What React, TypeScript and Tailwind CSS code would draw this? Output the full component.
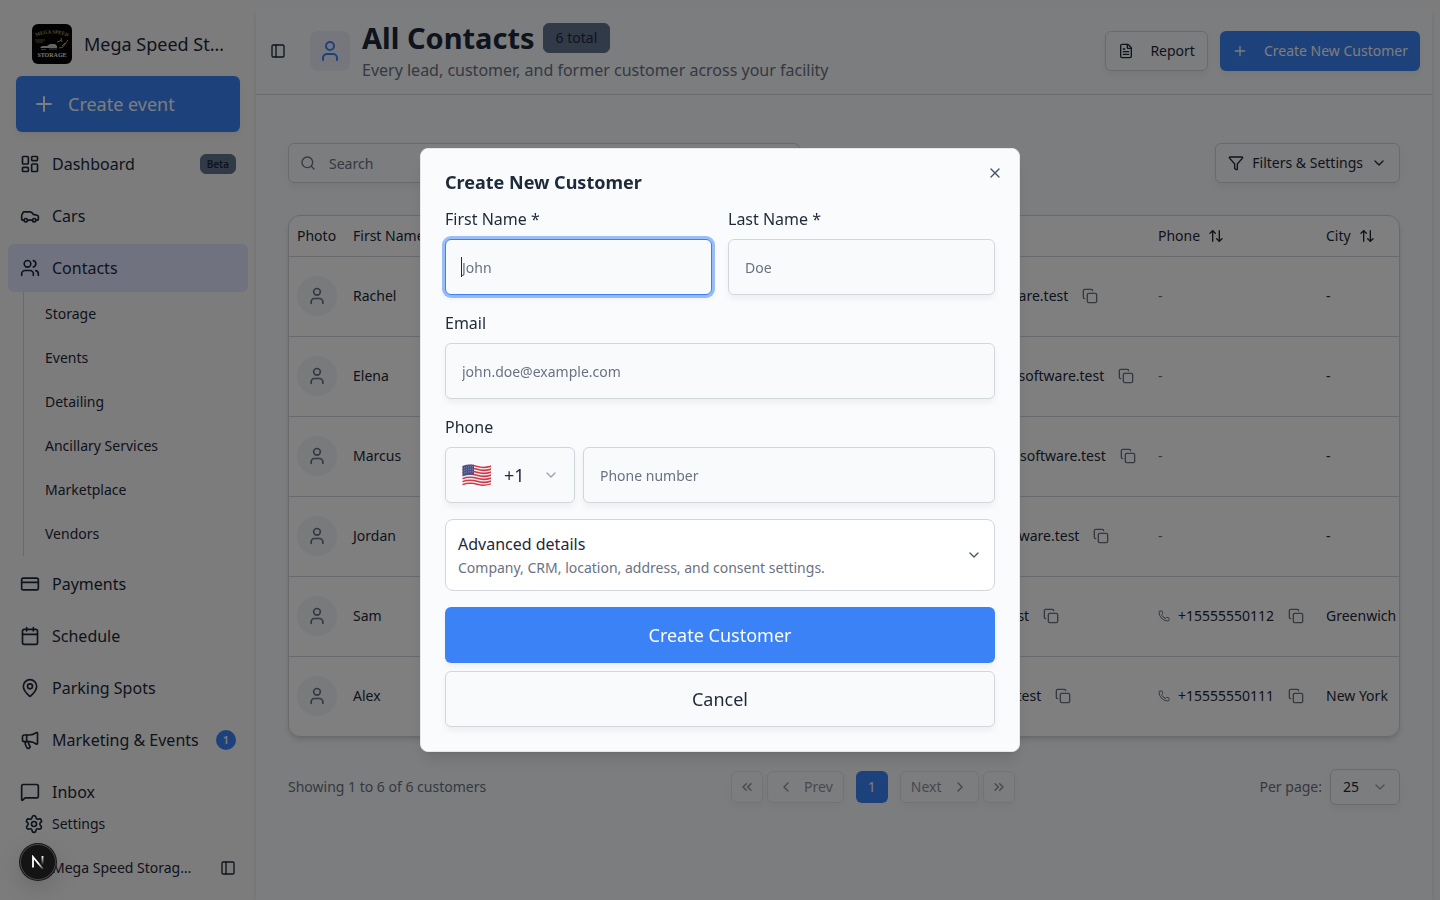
import React from 'react';
import {
  ArrowUpDown,
  Calendar,
  Car,
  ChevronDown,
  ChevronLeft,
  ChevronRight,
  ChevronsLeft,
  ChevronsRight,
  Copy,
  CreditCard,
  FileText,
  Funnel,
  LayoutDashboard,
  MapPin,
  Megaphone,
  MessageSquare,
  PanelLeft,
  Phone,
  Plus,
  Search,
  Settings,
  User,
  Users,
  X,
} from 'lucide-react';

const mainNav = [
  { label: 'Dashboard', icon: LayoutDashboard, beta: true },
  { label: 'Cars', icon: Car },
  {
    label: 'Contacts',
    icon: Users,
    active: true,
    children: ['Storage', 'Events', 'Detailing', 'Ancillary Services', 'Marketplace', 'Vendors'],
  },
  { label: 'Payments', icon: CreditCard },
  { label: 'Schedule', icon: Calendar },
  { label: 'Parking Spots', icon: MapPin },
  { label: 'Marketing & Events', icon: Megaphone, count: 1 },
  { label: 'Inbox', icon: MessageSquare },
];

const contacts = [
  { first: 'Rachel', last: 'Cooper', phone: '', city: '-' },
  { first: 'Elena', last: 'Montgomery', phone: '', city: '-' },
  { first: 'Marcus', last: 'Greenwood', phone: '', city: '-' },
  { first: 'Jordan', last: 'Osborne', phone: '', city: '-' },
  { first: 'Sam', last: 'Lee', phone: '+15555550112', city: 'Greenwich' },
  { first: 'Alex', last: 'Price', phone: '+15555550111', city: 'New York' },
];

const softShadow = 'shadow-[0_4px_6px_rgba(0,0,0,0.05)]';

const inputClass = `h-14 w-full min-w-0 rounded-md border border-gray-300 bg-[#f9fafc] px-4 text-sm text-gray-800 ${softShadow} outline-none placeholder:text-gray-500 focus:border-[#3b82f6] focus:ring-3 focus:ring-[#3b82f6]/50`;

const Logo = () => (
  <svg viewBox="0 0 40 40" className="size-10 shrink-0 rounded-md" aria-hidden="true">
    <rect width="40" height="40" fill="#050505" />
    <path id="logo-arc" d="M1 14Q20 5 39 14" fill="none" />
    <text fontSize="5" fontWeight="700" fontFamily="Liberation Serif, serif" fill="#b59a63">
      <textPath href="#logo-arc" startOffset="50%" textAnchor="middle">MEGA SPEED</textPath>
    </text>
    <path d="M3 16h10M4 18h7" stroke="#7d6a45" strokeWidth="1" />
    <path d="M8 24l2-2h5l3-2h5l2 2v2z" fill="#c9c9c9" />
    <path d="M9 25.500h5M17 25h8" stroke="#777" strokeWidth="1" />
    <path d="M25 18l3-1 2-2M27 24l4-1 5-7M30 22l3-3M29 14l1 4" stroke="#b59a63" strokeWidth="1" fill="none" />
    <text x="20" y="33" textAnchor="middle" fontSize="6" fontWeight="700" fontFamily="Liberation Serif, serif" fill="#e5e5e5">
      STORAGE
    </text>
  </svg>
);

const UsFlag = () => (
  <svg viewBox="-1 -1 30 24" className="h-6 w-[30px]" aria-hidden="true">
    <clipPath id="flag-shape">
      <path d="M0.500 2Q8 -0.500 15 1.500T29 1V20.500Q22 23 15 21.200T0.500 21.500Z" />
    </clipPath>
    <g clipPath="url(#flag-shape)">
      <rect width="30" height="24" fill="#f1f1f1" />
      {[0, 1, 2, 3, 4, 5, 6].map((i) => (
        <path
          key={i}
          d="M0 2.800Q8 0 15 2.300T30 1.800"
          transform={`translate(0 ${i * 3})`}
          stroke="#cf3a4b"
          strokeWidth="1.6"
          fill="none"
        />
      ))}
      <path d="M0 0H12V11Q7 10 0 12Z" fill="#4a5288" />
      <path
        d="M2 4Q7 2 11.500 3M2 6.500Q7 4.500 11.500 5.500M2 9Q7 7 11.500 8"
        stroke="#b9bdd6"
        strokeWidth="0.7"
        strokeDasharray="0.8 1.300"
        fill="none"
      />
    </g>
  </svg>
);

const Sidebar = () => (
  <aside className="flex w-64 shrink-0 flex-col text-gray-800">
    <div className="px-4 pt-6">
      <div className="flex items-center gap-3 pl-4">
        <Logo />
        <span className="text-lg whitespace-nowrap">Mega Speed St…</span>
      </div>
      <button
        type="button"
        className={`mt-3 flex h-14 w-full items-center gap-3 rounded-md bg-[#3b82f6] px-4 text-lg text-gray-50 ${softShadow}`}
      >
        <Plus className="size-6" />
        Create event
      </button>
    </div>

    <nav className="mt-2 min-h-0 flex-1 overflow-hidden px-2">
      <ul className="flex flex-col gap-1">
        {mainNav.map(({ label, icon: Icon, active, beta, count, children }) => (
          <li key={label}>
            <a href="#" className={`flex h-12 items-center gap-3 rounded-md px-3 ${active ? 'bg-indigo-100' : ''}`}>
              <Icon className="size-5 shrink-0" />
              <span className="flex-1 whitespace-nowrap">{label}</span>
              {beta && (
                <span className="flex h-5 items-center rounded-md border border-slate-500 bg-slate-500 px-1.5 text-[10px] font-semibold text-slate-800">
                  Beta
                </span>
              )}
              {count && (
                <span className="flex size-5 items-center justify-center rounded-full bg-[#3b82f6] text-[11px] font-semibold text-gray-50">
                  {count}
                </span>
              )}
            </a>
            {children && (
              <ul className="ml-[15px] border-l border-gray-300 pl-[21px]">
                {children.map((child) => (
                  <li key={child}>
                    <a href="#" className="flex h-11 items-center text-sm">{child}</a>
                  </li>
                ))}
              </ul>
            )}
          </li>
        ))}
      </ul>
    </nav>

    <div className="shrink-0 px-2 pb-3.5">
      <a href="#" className="flex h-9 items-center gap-2 px-4 text-sm">
        <Settings className="size-5" />
        Settings
      </a>
      <div className="mt-2 flex h-9 items-center gap-2 pr-3 pl-4 text-sm">
        <span className="size-5 rounded-full bg-gray-200" />
        <span className="flex-1 whitespace-nowrap">Mega Speed Storag…</span>
        <button type="button" aria-label="Collapse sidebar">
          <PanelLeft className="size-4" />
        </button>
      </div>
    </div>
  </aside>
);

const PageHeader = () => (
  <header className="flex items-center gap-3 border-b border-gray-300 py-3 pr-3 pl-3.5">
    <button type="button" aria-label="Toggle sidebar" className="mr-3">
      <PanelLeft className="size-4" />
    </button>
    <div className="flex size-10 items-center justify-center rounded-lg bg-[#eceffb] text-[#3b82f6]">
      <User className="size-6" />
    </div>
    <div className="flex-1">
      <div className="flex items-center gap-2">
        <h1 className="text-[29px] leading-9 font-bold whitespace-nowrap">All Contacts</h1>
        <span className="flex h-[30px] items-center rounded-md border border-slate-500 bg-slate-500 px-3 text-sm text-slate-800">
          6 total
        </span>
      </div>
      <p className="mt-0.5 text-gray-500">Every lead, customer, and former customer across your facility</p>
    </div>
    <button type="button" className={`flex h-10 items-center gap-4 rounded-md border border-gray-300 px-3 text-sm ${softShadow}`}>
      <FileText className="size-4" />
      Report
    </button>
    <button type="button" className={`flex h-10 items-center gap-4 rounded-md bg-[#3b82f6] px-3 text-sm text-gray-50 ${softShadow}`}>
      <Plus className="size-4" />
      Create New Customer
    </button>
  </header>
);

const CopyButton = () => (
  <button type="button" aria-label="Copy" className="flex size-7 items-center justify-center text-gray-500">
    <Copy className="size-4" />
  </button>
);

const SortHeader = ({ children }: { children: React.ReactNode }) => (
  <th className="px-2 text-left font-normal">
    <span className="flex items-center gap-2">
      {children}
      <ArrowUpDown className="size-4" />
    </span>
  </th>
);

const ContactsTable = () => (
  <div className="mt-8 overflow-hidden rounded-xl border border-gray-300 bg-white shadow-md">
    <table className="w-[1170px] table-fixed text-sm whitespace-nowrap">
      <colgroup>
        <col className="w-14" />
        <col className="w-[130px]" />
        <col className="w-40" />
        <col className="w-[237px]" />
        <col className="w-[278px]" />
        <col className="w-[168px]" />
        <col />
      </colgroup>
      <thead>
        <tr className="h-10 border-b border-gray-300">
          <th className="px-2 text-left font-normal">Photo</th>
          <SortHeader>First Name</SortHeader>
          <SortHeader>Last Name</SortHeader>
          <SortHeader>Type</SortHeader>
          <SortHeader>Email</SortHeader>
          <SortHeader>Phone</SortHeader>
          <SortHeader>City</SortHeader>
        </tr>
      </thead>
      <tbody>
        {contacts.map((c) => (
          <tr key={c.first} className="h-20 border-b border-gray-300 last:border-b-0">
            <td className="px-2">
              <span className="flex size-10 items-center justify-center rounded-full bg-gray-100 text-gray-500">
                <User className="size-5" />
              </span>
            </td>
            <td className="px-2">{c.first}</td>
            <td className="px-2">{c.last}</td>
            <td className="px-2">Customer</td>
            <td className="px-2">
              <span className="flex items-center gap-2">
                {`${c.first}.${c.last}@software.test`.toLowerCase()}
                <CopyButton />
              </span>
            </td>
            <td className="px-2">
              {c.phone ? (
                <span className="flex items-center gap-2">
                  <Phone className="size-3 text-gray-500" />
                  {c.phone}
                  <CopyButton />
                </span>
              ) : (
                <span className="text-gray-500">-</span>
              )}
            </td>
            <td className="px-2">{c.city}</td>
          </tr>
        ))}
      </tbody>
    </table>
  </div>
);

const pagerClass = `flex h-8 items-center rounded-md border border-gray-300 text-sm opacity-50 ${softShadow}`;

const Pagination = () => (
  <div className="mt-8 flex items-center justify-between text-sm">
    <p className="text-gray-500">Showing 1 to 6 of 6 customers</p>
    <div className="flex items-center gap-1">
      <button type="button" disabled aria-label="First page" className={`${pagerClass} w-8 justify-center`}>
        <ChevronsLeft className="size-4" />
      </button>
      <button type="button" disabled className={`${pagerClass} gap-2.5 px-2.5`}>
        <ChevronLeft className="size-4" />
        Prev
      </button>
      <button type="button" className="mx-2 size-8 rounded-md bg-[#3b82f6] text-gray-50">1</button>
      <button type="button" disabled className={`${pagerClass} gap-2.5 px-2.5`}>
        Next
        <ChevronRight className="size-4" />
      </button>
      <button type="button" disabled aria-label="Last page" className={`${pagerClass} w-8 justify-center`}>
        <ChevronsRight className="size-4" />
      </button>
    </div>
    <div className="flex items-center gap-2">
      <label htmlFor="per-page" className="text-gray-500">Per page:</label>
      <div className="relative">
        <select
          id="per-page"
          defaultValue="25"
          className={`h-9 w-[70px] appearance-none rounded-md border border-gray-300 px-3 ${softShadow}`}
        >
          <option>10</option>
          <option>25</option>
          <option>50</option>
        </select>
        <ChevronDown className="pointer-events-none absolute top-2.5 right-3 size-4 text-gray-400" />
      </div>
    </div>
  </div>
);

const CreateCustomerDialog = () => (
  <div className="fixed inset-0 z-20 flex items-center justify-center bg-black/50">
    <form
      role="dialog"
      aria-labelledby="dialog-title"
      className="relative flex w-full max-w-[600px] flex-col gap-4 rounded-lg border border-gray-200 bg-[#f9fbfd] p-6 text-gray-800 shadow-lg"
    >
      <h2 id="dialog-title" className="text-lg leading-[18px] font-bold">Create New Customer</h2>
      <button type="button" aria-label="Close" className="absolute top-4 right-4 text-gray-600">
        <X className="size-4" />
      </button>

      <div className="grid grid-cols-2 gap-4">
        <div className="flex flex-col gap-2">
          <label htmlFor="first-name">First Name *</label>
          <div className="relative">
            <input
              id="first-name"
              autoFocus
              placeholder="John"
              className={`peer placeholder-shown:caret-transparent ${inputClass}`}
            />
            {/* steady caret while the field is still empty */}
            <span className="pointer-events-none absolute top-[18px] left-4 hidden h-5 w-px bg-gray-800 peer-placeholder-shown:peer-focus:block" />
          </div>
        </div>
        <div className="flex flex-col gap-2">
          <label htmlFor="last-name">Last Name *</label>
          <input id="last-name" placeholder="Doe" className={inputClass} />
        </div>
      </div>

      <div className="flex flex-col gap-2">
        <label htmlFor="email">Email</label>
        <input id="email" type="email" placeholder="john.doe@example.com" className={inputClass} />
      </div>

      <div className="flex flex-col gap-2">
        <label htmlFor="phone">Phone</label>
        <div className="flex gap-2">
          <div className="relative shrink-0">
            <select
              aria-label="Country code"
              className={`h-14 w-[130px] appearance-none rounded-md border border-gray-300 bg-[#f9fafc] pl-[58px] text-lg ${softShadow}`}
            >
              <option>+1</option>
              <option>+44</option>
            </select>
            <span className="pointer-events-none absolute top-4 left-4">
              <UsFlag />
            </span>
            <ChevronDown className="pointer-events-none absolute top-5 right-4 size-4 text-gray-400" />
          </div>
          <input id="phone" type="tel" placeholder="Phone number" className={inputClass} />
        </div>
      </div>

      <button
        type="button"
        aria-expanded="false"
        className="flex items-center justify-between rounded-lg border border-gray-300 bg-white p-3 text-left"
      >
        <span className="flex flex-col gap-0.5">
          <span>Advanced details</span>
          <span className="text-sm text-gray-500">Company, CRM, location, address, and consent settings.</span>
        </span>
        <ChevronDown className="size-4 text-gray-600" />
      </button>

      <div className="flex flex-col gap-2">
        <button type="submit" className={`h-14 rounded-md bg-[#3b82f6] text-lg text-gray-50 ${softShadow}`}>Create Customer</button>
        <button type="button" className={`h-14 rounded-md border border-gray-300 bg-[#f9fafc] text-lg ${softShadow}`}>Cancel</button>
      </div>
    </form>
  </div>
);

const DevBadge = () => (
  <button
    type="button"
    aria-label="Open dev tools"
    className="fixed bottom-5 left-5 z-30 flex size-9 items-center justify-center rounded-full bg-[#141414] shadow-[0_0_0_1px_#171717,inset_0_0_0_1px_#444444,0_8px_24px_rgba(0,0,0,0.15)]"
  >
    <svg width="14" height="14" viewBox="0 0 14 14" fill="none" aria-hidden="true">
      <defs>
        <linearGradient id="n-diagonal" x1="8" y1="8" x2="13" y2="14" gradientUnits="userSpaceOnUse">
          <stop stopColor="white" />
          <stop offset="1" stopColor="white" stopOpacity="0.1" />
        </linearGradient>
        <linearGradient id="n-stem" x1="11" y1="1" x2="11" y2="10" gradientUnits="userSpaceOnUse">
          <stop stopColor="white" />
          <stop offset="1" stopColor="white" stopOpacity="0" />
        </linearGradient>
      </defs>
      <path d="M2 12.500V2L12 14" stroke="url(#n-diagonal)" strokeWidth="1.8" />
      <path d="M11.500 1v9" stroke="url(#n-stem)" strokeWidth="1.8" />
    </svg>
  </button>
);

const App: React.FC = () => {
  return (
    <div className="flex h-screen overflow-hidden bg-[#f8f8f8] font-['Noto_Sans',sans-serif] text-gray-800">
      <Sidebar />
      <main className="mt-2 mr-2 min-w-0 flex-1 bg-[#f8fafc] shadow-md">
        <PageHeader />
        <div className="px-8 pt-12">
          <div className="flex items-center justify-between">
            <div className="relative w-full max-w-lg">
              <Search className="absolute top-3 left-3 size-4 text-gray-500" />
              <input
                type="search"
                aria-label="Search"
                placeholder="Search"
                className={`h-10 w-full rounded-md border border-gray-300 pr-3 pl-10 text-sm placeholder:text-gray-500 ${softShadow}`}
              />
            </div>
            <button type="button" className={`flex h-10 items-center gap-2 rounded-md border border-gray-300 px-3 text-sm ${softShadow}`}>
              <Funnel className="size-4" />
              Filters &amp; Settings
              <ChevronDown className="size-4" />
            </button>
          </div>
          <ContactsTable />
          <Pagination />
        </div>
      </main>
      <CreateCustomerDialog />
      <DevBadge />
    </div>
  );
};

export default App;
